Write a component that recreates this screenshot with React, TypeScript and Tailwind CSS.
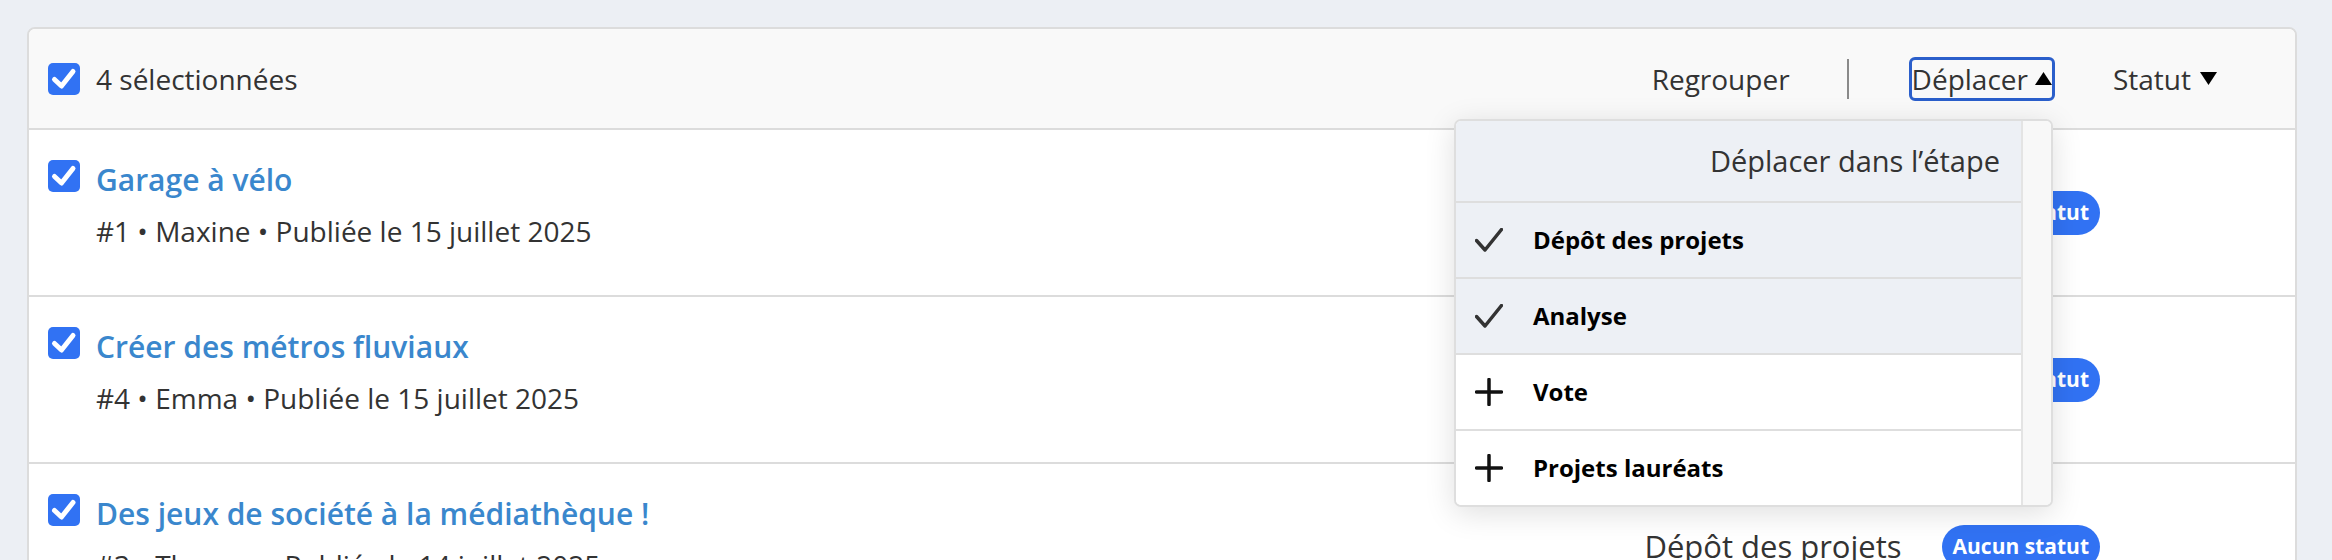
import React from "react";

const Check = () => (
  <div className="w-[32px] h-[32px] rounded-[5px] bg-[#3172f3] flex items-center justify-center shrink-0">
    <svg width="32" height="32" viewBox="0 0 32 32">
      <path d="M6.5 16.5 L13.5 23 L25 8.5" fill="none" stroke="white" strokeWidth="5" strokeLinecap="round" strokeLinejoin="round" />
    </svg>
  </div>
);

const TriUp = () => (
  <svg width="17" height="13" viewBox="0 0 17 13" className="ml-[7px]">
    <path d="M8.5 0 L17 13 L0 13 Z" fill="#000" />
  </svg>
);

const TriDown = () => (
  <svg width="17" height="13" viewBox="0 0 17 13" className="ml-[9px]">
    <path d="M0 0 L17 0 L8.5 13 Z" fill="#000" />
  </svg>
);

const CheckIcon = () => (
  <svg width="28" height="24" viewBox="0 0 28 24">
    <path d="M1.5 12.5 L10 22 L26.5 1.5" fill="none" stroke="#333" strokeWidth="3.5" strokeLinecap="round" strokeLinejoin="round" />
  </svg>
);

const PlusIcon = () => (
  <svg width="28" height="28" viewBox="0 0 28 28">
    <path d="M14 1.5 V26.5 M1.5 14 H26.5" fill="none" stroke="#111" strokeWidth="3.5" strokeLinecap="round" />
  </svg>
);

const rows = [
  { title: "Garage à vélo", meta: "#1 • Maxine • Publiée le 15 juillet 2025" },
  { title: "Créer des métros fluviaux", meta: "#4 • Emma • Publiée le 15 juillet 2025" },
  { title: "Des jeux de société à la médiathèque !", meta: "#3 • Thomas • Publiée le 14 juillet 2025" },
];

const items = [
  { label: "Dépôt des projets", checked: true },
  { label: "Analyse", checked: true },
  { label: "Vote", checked: false },
  { label: "Projets lauréats", checked: false },
];

export default function App() {
  return (
    <div className="min-h-screen bg-[#eceff4] pt-[27px] pl-[27px] pr-[35px] font-['Open_Sans',sans-serif] text-[#333]">
      <div className="bg-white border-2 border-[#dcdcdc] rounded-t-[8px]">
        <div className="h-[101px] bg-[#f9f9f9] border-b-2 border-[#dcdcdc] rounded-t-[6px] flex items-center pl-[19px] pr-[78px]">
          <Check />
          <span className="ml-[16px] text-[28px]">4 sélectionnées</span>
          <div className="ml-auto flex items-center">
            <span className="text-[28px]">Regrouper</span>
            <div className="w-[2px] h-[40px] bg-[#8a8a8a] ml-[57px] mr-[60px]" />
            <div className="relative">
              <button className="h-[44px] border-[3px] border-[#2b5fcb] rounded-[6px] flex items-center text-[28px] text-[#333] pr-[0px]">
                Déplacer
                <TriUp />
              </button>
              <div className="absolute right-[2px] top-[62px] w-[599px] h-[388px] bg-white border-2 border-[#dedede] rounded-[7px] shadow-[0_6px_30px_rgba(0,0,0,0.13)] flex overflow-hidden z-10">
                <div className="flex-1 flex flex-col">
                  <div className="h-[82px] shrink-0 bg-[#edf0f5] border-b-2 border-[#dedede] flex items-center justify-end pr-[21px] text-[29px] text-[#333]">
                    Déplacer dans l’étape
                  </div>
                  {items.map((it, i) => (
                    <div
                      key={it.label}
                      className={
                        "flex items-center pl-[19px] shrink-0 " +
                        (i < 3 ? "h-[76px] border-b-2 border-[#dedede] " : "h-[74px] ") +
                        (it.checked ? "bg-[#edf0f5]" : "bg-white")
                      }
                    >
                      <div className="w-[28px] flex items-center justify-center">
                        {it.checked ? <CheckIcon /> : <PlusIcon />}
                      </div>
                      <span className="ml-[30px] text-[24px] font-bold text-black">{it.label}</span>
                    </div>
                  ))}
                </div>
                <div className="w-[30px] bg-[#f8f8f8] border-l-2 border-[#e4e4e4]" />
              </div>
            </div>
            <span className="ml-[58px] text-[28px] flex items-center">
              Statut
              <TriDown />
            </span>
          </div>
        </div>
        {rows.map((r) => (
          <div key={r.title} className="h-[167px] border-b-2 border-[#dcdcdc] flex pl-[19px] pr-[195px]">
            <div className="pt-[30px] flex items-start">
              <Check />
              <div className="ml-[16px]">
                <div className="mt-[2px] text-[30px] leading-[36px] font-semibold text-[#3a87cd]">{r.title}</div>
                <div className="mt-[15px] text-[28px] leading-[36px]">{r.meta}</div>
              </div>
            </div>
            <div className="ml-auto flex items-center">
              <span className="text-[31px]">Dépôt des projets</span>
              <span className="ml-[40px] h-[44px] px-[11px] rounded-full bg-[#3172f3] text-white text-[21px] font-bold flex items-center">
                Aucun statut
              </span>
            </div>
          </div>
        ))}
      </div>
    </div>
  );
}
